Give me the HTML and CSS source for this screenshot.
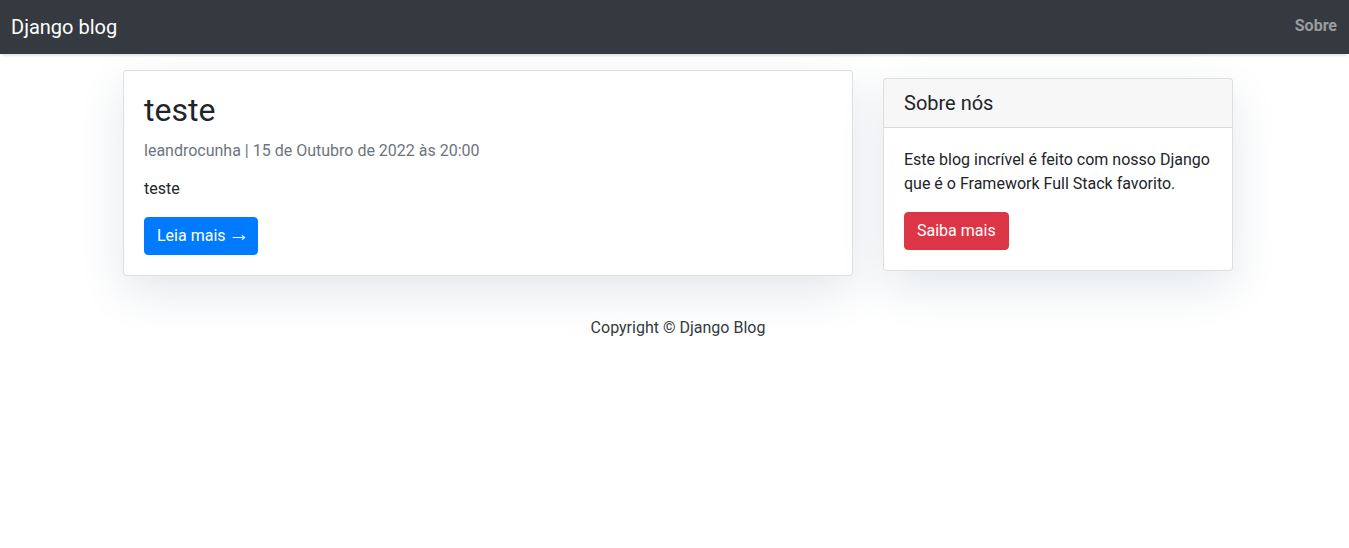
FILE: index.html
```html
<!DOCTYPE html>
<html lang="pt-br">
<head>
<meta charset="utf-8">
<title>Django blog</title>
<link rel="stylesheet" href="styles.css">
</head>
<body>
<nav class="navbar">
  <a class="brand" href="#">Django blog</a>
  <a class="nav-link" href="#">Sobre</a>
</nav>
<div class="container">
  <div class="row">
    <div class="col-main">
      <div class="card card-post">
        <div class="card-body">
          <h2 class="card-title">teste</h2>
          <p class="card-meta">leandrocunha | 15 de Outubro de 2022 às 20:00</p>
          <p class="card-text">teste</p>
          <a href="#" class="btn btn-primary">Leia mais <span class="arrow">&rarr;</span></a>
        </div>
      </div>
    </div>
    <div class="col-side">
      <div class="card card-side">
        <h5 class="card-header">Sobre nós</h5>
        <div class="card-body">
          <p class="card-text">Este blog incrível é feito com nosso Django que é o Framework Full Stack favorito.</p>
          <a href="#" class="btn btn-danger">Saiba mais</a>
        </div>
      </div>
    </div>
  </div>
</div>
<footer class="footer">
  <p class="footer-text">Copyright &copy; Django Blog</p>
</footer>
</body>
</html>
```
FILE: styles.css
```css
* { box-sizing: border-box; }
html, body { margin: 0; padding: 0; }
body {
  font-family: Roboto, "Liberation Sans", sans-serif;
  font-size: 16px;
  line-height: 1.5;
  color: #212529;
  background-color: #fff;
}
a { text-decoration: none; }

.navbar {
  height: 54px;
  background-color: #343a40;
  display: flex;
  align-items: center;
  justify-content: space-between;
  padding: 0 12px 0 11px;
  box-shadow: 0 4px 2px -2px rgba(0, 0, 0, 0.1);
  position: relative;
}
.brand {
  color: #fff;
  font-size: 20px;
  line-height: 30px;
  margin-top: -1px;
}
.nav-link {
  color: rgba(255, 255, 255, 0.5);
  font-weight: 700;
  font-size: 16px;
  line-height: 24px;
  margin-top: -3px;
}

.container {
  width: 1140px;
  margin-left: 108px;
}
.row {
  display: flex;
  align-items: flex-start;
}
.col-main {
  width: 760px;
  padding: 0 15px;
  margin-top: 16px;
}
.col-side {
  width: 380px;
  padding: 0 15px;
}

.card {
  background: #fff;
  border: 1px solid rgba(0, 0, 0, 0.125);
  border-radius: 4px;
  box-shadow: 0 16px 48px #e3e7eb;
}
.card-post { margin-bottom: 24px; }
.card-side { margin: 24px 0; }
.card-body { padding: 20px; }
.card-title {
  margin: 0 0 12px;
  font-size: 32px;
  line-height: 1.2;
  font-weight: 400;
}
.card-meta {
  margin: 0 0 16px;
  color: #6c757d;
  font-size: 16px;
  line-height: 1.2;
}
.card-text { margin: 0 0 16px; }
.card-header {
  margin: 0;
  padding: 12px 20px;
  font-size: 20px;
  font-weight: 400;
  line-height: 1.2;
  background-color: rgba(0, 0, 0, 0.03);
  border-bottom: 1px solid rgba(0, 0, 0, 0.125);
  border-radius: 3px 3px 0 0;
}

.btn {
  display: inline-block;
  padding: 6px 12px;
  font-size: 16px;
  line-height: 1.5;
  border: 1px solid transparent;
  border-radius: 4px;
  color: #fff;
}
.arrow {
  display: inline-block;
  font-size: 21px;
  line-height: 16px;
  font-weight: 300;
  margin-left: -1px;
  margin-right: -5px;
}
.btn-primary { background-color: #007bff; border-color: #007bff; }
.btn-danger { background-color: #dc3545; border-color: #dc3545; }

.footer {
  width: 1140px;
  margin-left: 108px;
  padding: 16px 0;
}
.footer-text {
  margin: 0;
  text-align: center;
  color: #343a40;
}
```
